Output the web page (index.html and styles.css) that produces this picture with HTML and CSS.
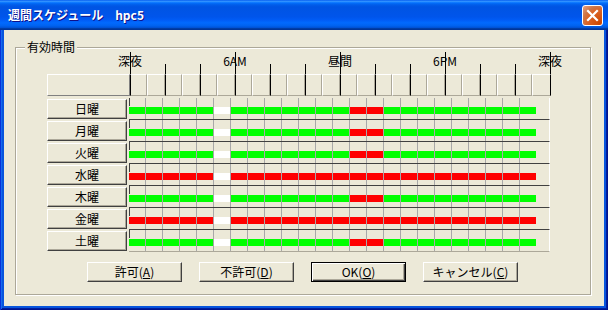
FILE: index.html
```html
<!DOCTYPE html>
<html lang="ja">
<head>
  <meta charset="UTF-8">
  <title>週間スケジュール hpc5</title>
  <link rel="stylesheet" href="styles.css">
</head>
<body>
  <div class="window">
    <div class="titlebar">
      <span class="title">週間スケジュール　hpc5</span>
      <div class="close">
        <svg width="13" height="13" viewBox="0 0 13 13">
          <path d="M2 2 L11 11 M11 2 L2 11" stroke="#fff" stroke-width="2.2" stroke-linecap="square"/>
        </svg>
      </div>
    </div>

    <div class="frame">
      <div class="client">
        <div class="group">
          <div class="legend">有効時間</div>

          <div class="panel">
            <div class="ruler">
              <div class="labels">
                <span>深夜</span>
                <span>6AM</span>
                <span>昼間</span>
                <span>6PM</span>
                <span>深夜</span>
              </div>
              <div class="ticks">
                <i></i><i></i><i></i><i></i><i></i><i></i>
                <i></i><i></i><i></i><i></i><i></i><i></i>
              </div>
            </div>

            <div class="header" id="header">
              <div class="corner"></div>
            </div>

            <div class="rows" id="rows"></div>

            <div class="actions">
              <button class="btn">許可(<u>A</u>)</button>
              <button class="btn">不許可(<u>D</u>)</button>
              <button class="btn default">OK(<u>O</u>)</button>
              <button class="btn">キャンセル(<u>C</u>)</button>
            </div>
          </div>
        </div>
      </div>
    </div>
  </div>

  <script>
    // 1 = 許可, 0 = 不許可, - = 未設定
    const mixed = '11111-' + '1111111' + '00' + '111111111';
    const denied = '00000-' + '0'.repeat(18);

    const week = [
      ['日曜', mixed],
      ['月曜', mixed],
      ['火曜', mixed],
      ['水曜', denied],
      ['木曜', mixed],
      ['金曜', denied],
      ['土曜', mixed]
    ];

    const header = document.getElementById('header');
    for (let h = 0; h < 24; h++) {
      const cell = document.createElement('div');
      cell.className = 'hour' + (h % 2 ? ' odd' : ' even') + (h === 23 ? ' last' : '');
      header.appendChild(cell);
    }

    const states = { '1': 'on', '0': 'off', '-': 'none' };
    const rows = document.getElementById('rows');
    week.forEach(([name, plan]) => {
      const row = document.createElement('div');
      row.className = 'row';

      const day = document.createElement('div');
      day.className = 'day';
      day.textContent = name;
      row.appendChild(day);

      const cells = document.createElement('div');
      cells.className = 'cells';
      for (const c of plan) {
        const cell = document.createElement('div');
        cell.className = 'cell ' + states[c];
        cell.innerHTML = '<b></b>';
        cells.appendChild(cell);
      }
      row.appendChild(cells);
      rows.appendChild(row);
    });
  </script>
</body>
</html>
```

FILE: styles.css
```css
* {
  margin: 0;
  padding: 0;
  box-sizing: border-box;
}

body {
  width: 608px;
  height: 310px;
  overflow: hidden;
  font-family: "Noto Sans CJK JP", "Liberation Sans", sans-serif;
  font-size: 12px;
  color: #000;
}

.window {
  width: 608px;
  height: 310px;
  display: flex;
  flex-direction: column;
}

.titlebar {
  height: 30px;
  display: flex;
  justify-content: space-between;
  padding: 0 5px 0 8px;
  background: linear-gradient(to bottom,
    #0058ee 0%, #3593ff 4%, #288eff 6%, #127dff 8%, #036ffc 10%,
    #0262ee 14%, #0057e5 20%, #0054e3 24%, #0055eb 56%, #005bf5 66%,
    #026afe 76%, #0062ef 86%, #0052d6 92%, #0040ab 94%, #003092 100%);
}

.title {
  color: #fff;
  font-weight: bold;
  font-size: 12px;
  line-height: 30px;
  text-shadow: 1px 1px #0f1089;
}

.close {
  width: 21px;
  height: 21px;
  margin-top: 5px;
  border: 1px solid #fff;
  border-radius: 3px;
  background: radial-gradient(circle at 90% 90%, #cc4600 0%, #dc6527 55%, #cd7546 70%, #e8a281 100%);
  display: flex;
  align-items: center;
  justify-content: center;
}

.frame {
  flex: 1;
  padding: 0 4px 4px;
  background: #0855dd;
  box-shadow: inset 1px 0 #0831d9, inset -1px 0 #00138c, inset 0 -1px #00138c,
    inset 2px 0 #166aee, inset -2px 0 #001ea0, inset 0 -2px #001ea0;
}

.client {
  height: 100%;
  background: #ece9d8;
  padding: 17px 0 0 11px;
}

.group {
  width: 576px;
  height: 248px;
  border: 1px solid #aca899;
  box-shadow: inset 1px 1px #fff, 1px 1px #fff;
}

.legend {
  width: max-content;
  height: 14px;
  line-height: 14px;
  margin: -8px 0 0 9px;
  padding: 0 2px;
  background: #ece9d8;
}

.panel {
  margin-left: 31px;
}

/* 時刻の目盛り */
.ruler {
  display: grid;
  height: 22px;
  margin-top: -2px;
}

.labels,
.ticks {
  grid-area: 1 / 1;
  display: flex;
}

.labels {
  gap: 45px;
  margin-left: 53px;
}

.labels span {
  width: 60px;
  text-align: center;
  padding-top: 2px;
  line-height: 14px;
  background: linear-gradient(#000, #000) 30px 0 / 1px 100% no-repeat;
}

.ticks {
  align-items: flex-end;
  margin-left: 83px;
}

.ticks i {
  width: 35px;
  height: 10px;
  border-left: 1px solid #000;
}

.header {
  display: flex;
  height: 22px;
}

.corner {
  width: 83px;
  border: 1px solid;
  border-color: #fff #808080 #808080 #fff;
}

.hour {
  width: 17px;
  border: 1px solid;
  border-color: #fff #aca899 #aca899 #fff;
}

.hour.odd {
  width: 18px;
}

.hour.even {
  border-left-color: #000;
}

.hour.last {
  width: 19px;
  border-right-color: #000;
}

/* 曜日ごとの行 */
.rows {
  margin-top: 2px;
}

.row {
  display: flex;
  height: 22px;
}

.day {
  width: 80px;
  height: 20px;
  margin: 1px 2px 0 0;
  border: 1px solid;
  border-color: #fff #404040 #404040 #fff;
  box-shadow: inset -1px -1px #aca899;
  text-align: center;
  line-height: 18px;
}

.cells {
  display: flex;
  width: 421px;
  border-right: 1px solid #fff;
  border-bottom: 1px solid #404040;
  background: linear-gradient(#404040, #404040) 0 0 / 1px 8px no-repeat;
}

.row:last-child .cells {
  border-bottom-color: #aca899;
}

.cell {
  width: 17px;
  padding-top: 9px;
  border-right: 1px solid #a8a8a8;
}

.cell:last-child {
  width: 16px;
  border-right: none;
}

.cell b {
  display: block;
  height: 7px;
}

.cell.on b {
  background: #00ff00;
}

.cell.off b {
  background: #ff0000;
}

.cell.none b {
  background: #fff;
}

.actions {
  display: flex;
  gap: 17px;
  margin: 10px 0 0 40px;
}

.btn {
  width: 95px;
  height: 20px;
  font: inherit;
  line-height: 18px;
  color: #000;
  background: #ece9d8;
  border: 1px solid;
  border-color: #fff #404040 #404040 #fff;
  box-shadow: inset -1px -1px #aca899;
}

.btn.default {
  border-color: #000;
  box-shadow: inset 1px 1px #fff, inset -1px -1px #404040, inset -2px -2px #aca899;
}
```
